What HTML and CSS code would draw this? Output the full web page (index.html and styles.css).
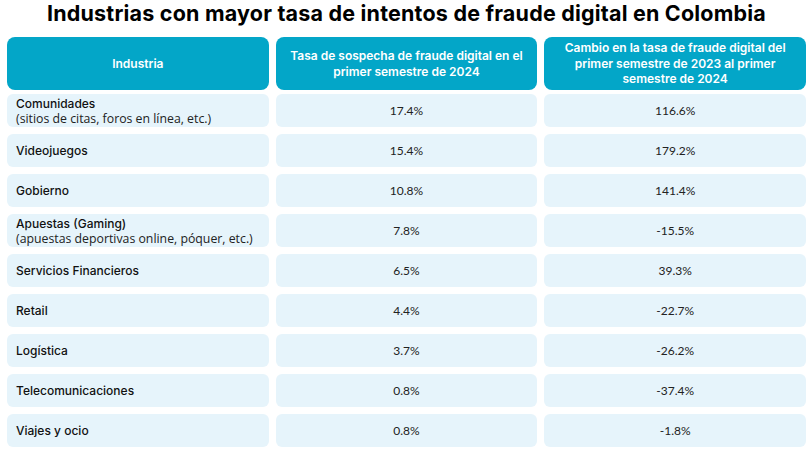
FILE: index.html
```html
<!DOCTYPE html>
<html lang="es">
<head>
<meta charset="utf-8">
<title>Industrias con mayor tasa de intentos de fraude digital en Colombia</title>
<link rel="stylesheet" href="styles.css">
</head>
<body>
<div class="page">
  <h1 class="title">Industrias con mayor tasa de intentos de fraude digital en Colombia</h1>
  <div class="table">
    <div class="head">
      <div class="hcell">Industria</div>
      <div class="hcell">Tasa de sospecha de fraude digital en el primer semestre de 2024</div>
      <div class="hcell">Cambio en la tasa de fraude digital del primer semestre de 2023 al primer semestre de 2024</div>
    </div>
    <div class="rows">
      <div class="cell name"><span class="main">Comunidades</span><span class="sub">(sitios de citas, foros en línea, etc.)</span></div>
      <div class="cell num">17.4%</div>
      <div class="cell num">116.6%</div>

      <div class="cell name"><span class="main">Videojuegos</span></div>
      <div class="cell num">15.4%</div>
      <div class="cell num">179.2%</div>

      <div class="cell name"><span class="main">Gobierno</span></div>
      <div class="cell num">10.8%</div>
      <div class="cell num">141.4%</div>

      <div class="cell name"><span class="main">Apuestas (Gaming)</span><span class="sub">(apuestas deportivas online, póquer, etc.)</span></div>
      <div class="cell num">7.8%</div>
      <div class="cell num">-15.5%</div>

      <div class="cell name"><span class="main">Servicios Financieros</span></div>
      <div class="cell num">6.5%</div>
      <div class="cell num">39.3%</div>

      <div class="cell name"><span class="main">Retail</span></div>
      <div class="cell num">4.4%</div>
      <div class="cell num">-22.7%</div>

      <div class="cell name"><span class="main">Logística</span></div>
      <div class="cell num">3.7%</div>
      <div class="cell num">-26.2%</div>

      <div class="cell name"><span class="main">Telecomunicaciones</span></div>
      <div class="cell num">0.8%</div>
      <div class="cell num">-37.4%</div>

      <div class="cell name"><span class="main">Viajes y ocio</span></div>
      <div class="cell num">0.8%</div>
      <div class="cell num">-1.8%</div>
    </div>
  </div>
</div>
</body>
</html>
```

FILE: styles.css
```css
html, body {
  margin: 0;
  padding: 0;
  background: #ffffff;
}
.page {
  width: 807px;
  height: 462px;
  padding: 0 1px 0 7px;
  box-sizing: border-box;
  font-family: "Lato", "Liberation Sans", sans-serif;
  color: #1f1f1f;
}
.title {
  margin: 0;
  height: 37px;
  line-height: 26px;
  font-family: "Inter", "Liberation Sans", sans-serif;
  font-size: 21.5px;
  font-weight: 700;
  text-align: center;
  color: #000;
  letter-spacing: 0.2px;
}
.head {
  display: grid;
  grid-template-columns: repeat(3, 1fr);
  column-gap: 7px;
  margin-bottom: 4px;
}
.hcell {
  height: 53px;
  background: #03a6c8;
  border-radius: 8px;
  color: #ffffff;
  font-family: "Inter", "Liberation Sans", sans-serif;
  font-weight: 600;
  font-size: 12px;
  line-height: 15.5px;
  display: flex;
  align-items: center;
  justify-content: center;
  text-align: center;
  padding: 0 12px;
}
.rows {
  display: grid;
  grid-template-columns: repeat(3, 1fr);
  column-gap: 7px;
  row-gap: 7px;
}
.cell {
  height: 33px;
  background: #e6f4fb;
  border-radius: 6px;
  font-size: 12px;
  line-height: 14px;
  display: flex;
}
.name {
  flex-direction: column;
  justify-content: center;
  padding: 0 9px;
}
.main {
  font-family: "Inter", "Liberation Sans", sans-serif;
  font-weight: 500;
  font-size: 12px;
  line-height: 15px;
  color: #111;
}
.sub {
  font-family: "Open Sans", "Liberation Sans", sans-serif;
  font-size: 12.3px;
  line-height: 15px;
  color: #222;
}
.num {
  align-items: center;
  justify-content: center;
  color: #222;
}
```
